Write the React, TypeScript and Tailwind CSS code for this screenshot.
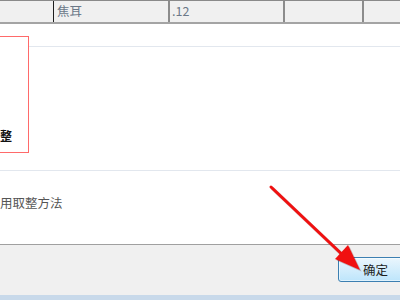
import React from 'react';

const font = { fontFamily: '"Microsoft YaHei", "Noto Sans CJK SC", "Liberation Sans", sans-serif' };

const App: React.FC = () => {
  return (
    <div className="relative w-[400px] h-[300px] overflow-hidden bg-white flex flex-col" style={font}>
      {/* table row */}
      <div className="flex h-[24px] shrink-0 border-t border-[#8a8a8a] border-b-2 border-b-[#a4a4a4] bg-[#f0f0f0] text-[12.5px] text-[#6b7888]">
        <div className="w-[54px] border-r border-[#1e1e1e]" />
        <div className="w-[116px] border-r-2 border-[#8c8c8c] pl-[3px] leading-[20px]">焦耳</div>
        <div className="w-[115px] border-r-2 border-[#8c8c8c] pl-[2px] leading-[20px]">.12</div>
        <div className="w-[79px] border-r-2 border-[#8c8c8c]" />
        <div className="flex-1" />
      </div>

      {/* highlighted group */}
      <div className="flex shrink-0 mt-[12px] h-[117px]">
        <div className="w-[30px] -ml-[1px] border border-l-0 border-[#ff6a6a] flex items-end justify-end pr-[16px] pb-[9px]">
          <span className="whitespace-nowrap font-bold text-[12px] leading-[15px] text-[#111]">整</span>
        </div>
        <div className="flex-1 mt-[10px] h-px bg-[#e2e7ee]" />
      </div>

      <div className="shrink-0 mt-[17px] h-px bg-[#e2e7ee]" />

      <div className="shrink-0 mt-[24px] text-[12.5px] leading-[16px] text-[#555] whitespace-nowrap">
        用取整方法
      </div>

      <div className="flex-1" />

      {/* footer */}
      <div className="shrink-0 h-[56px] border-t border-[#a0a0a0] bg-[#f0f0f0] flex flex-col">
        <div className="flex-1 pt-[12px] pl-[338px]">
          <div className="w-[80px] h-[25px] rounded-[3px] border border-[#3c7fb1] bg-gradient-to-b from-[#eaf6fd] to-[#bde5fb] shadow-[inset_0_0_0_1px_#ffffff80] pl-[24px] text-[12.5px] leading-[23px] text-[#1e1e1e]">
            确定
          </div>
        </div>
        <div className="h-[5px] bg-[#c8d9ea]" />
      </div>

      {/* annotation arrow */}
      <svg className="absolute inset-0 pointer-events-none" width="400" height="300" viewBox="0 0 400 300">
        <g opacity="0.25" transform="translate(1.5,1.5)">
          <line x1="271" y1="187" x2="350" y2="262" stroke="#600" strokeWidth="3.5" strokeLinecap="round" />
          <polygon points="360,270 335,259 348,245" fill="#600" />
        </g>
        <line x1="271" y1="187" x2="348" y2="260" stroke="#f01010" strokeWidth="3" strokeLinecap="round" />
        <polygon points="360,270 335,259 348,245" fill="#f01010" />
      </svg>
    </div>
  );
};

export default App;
